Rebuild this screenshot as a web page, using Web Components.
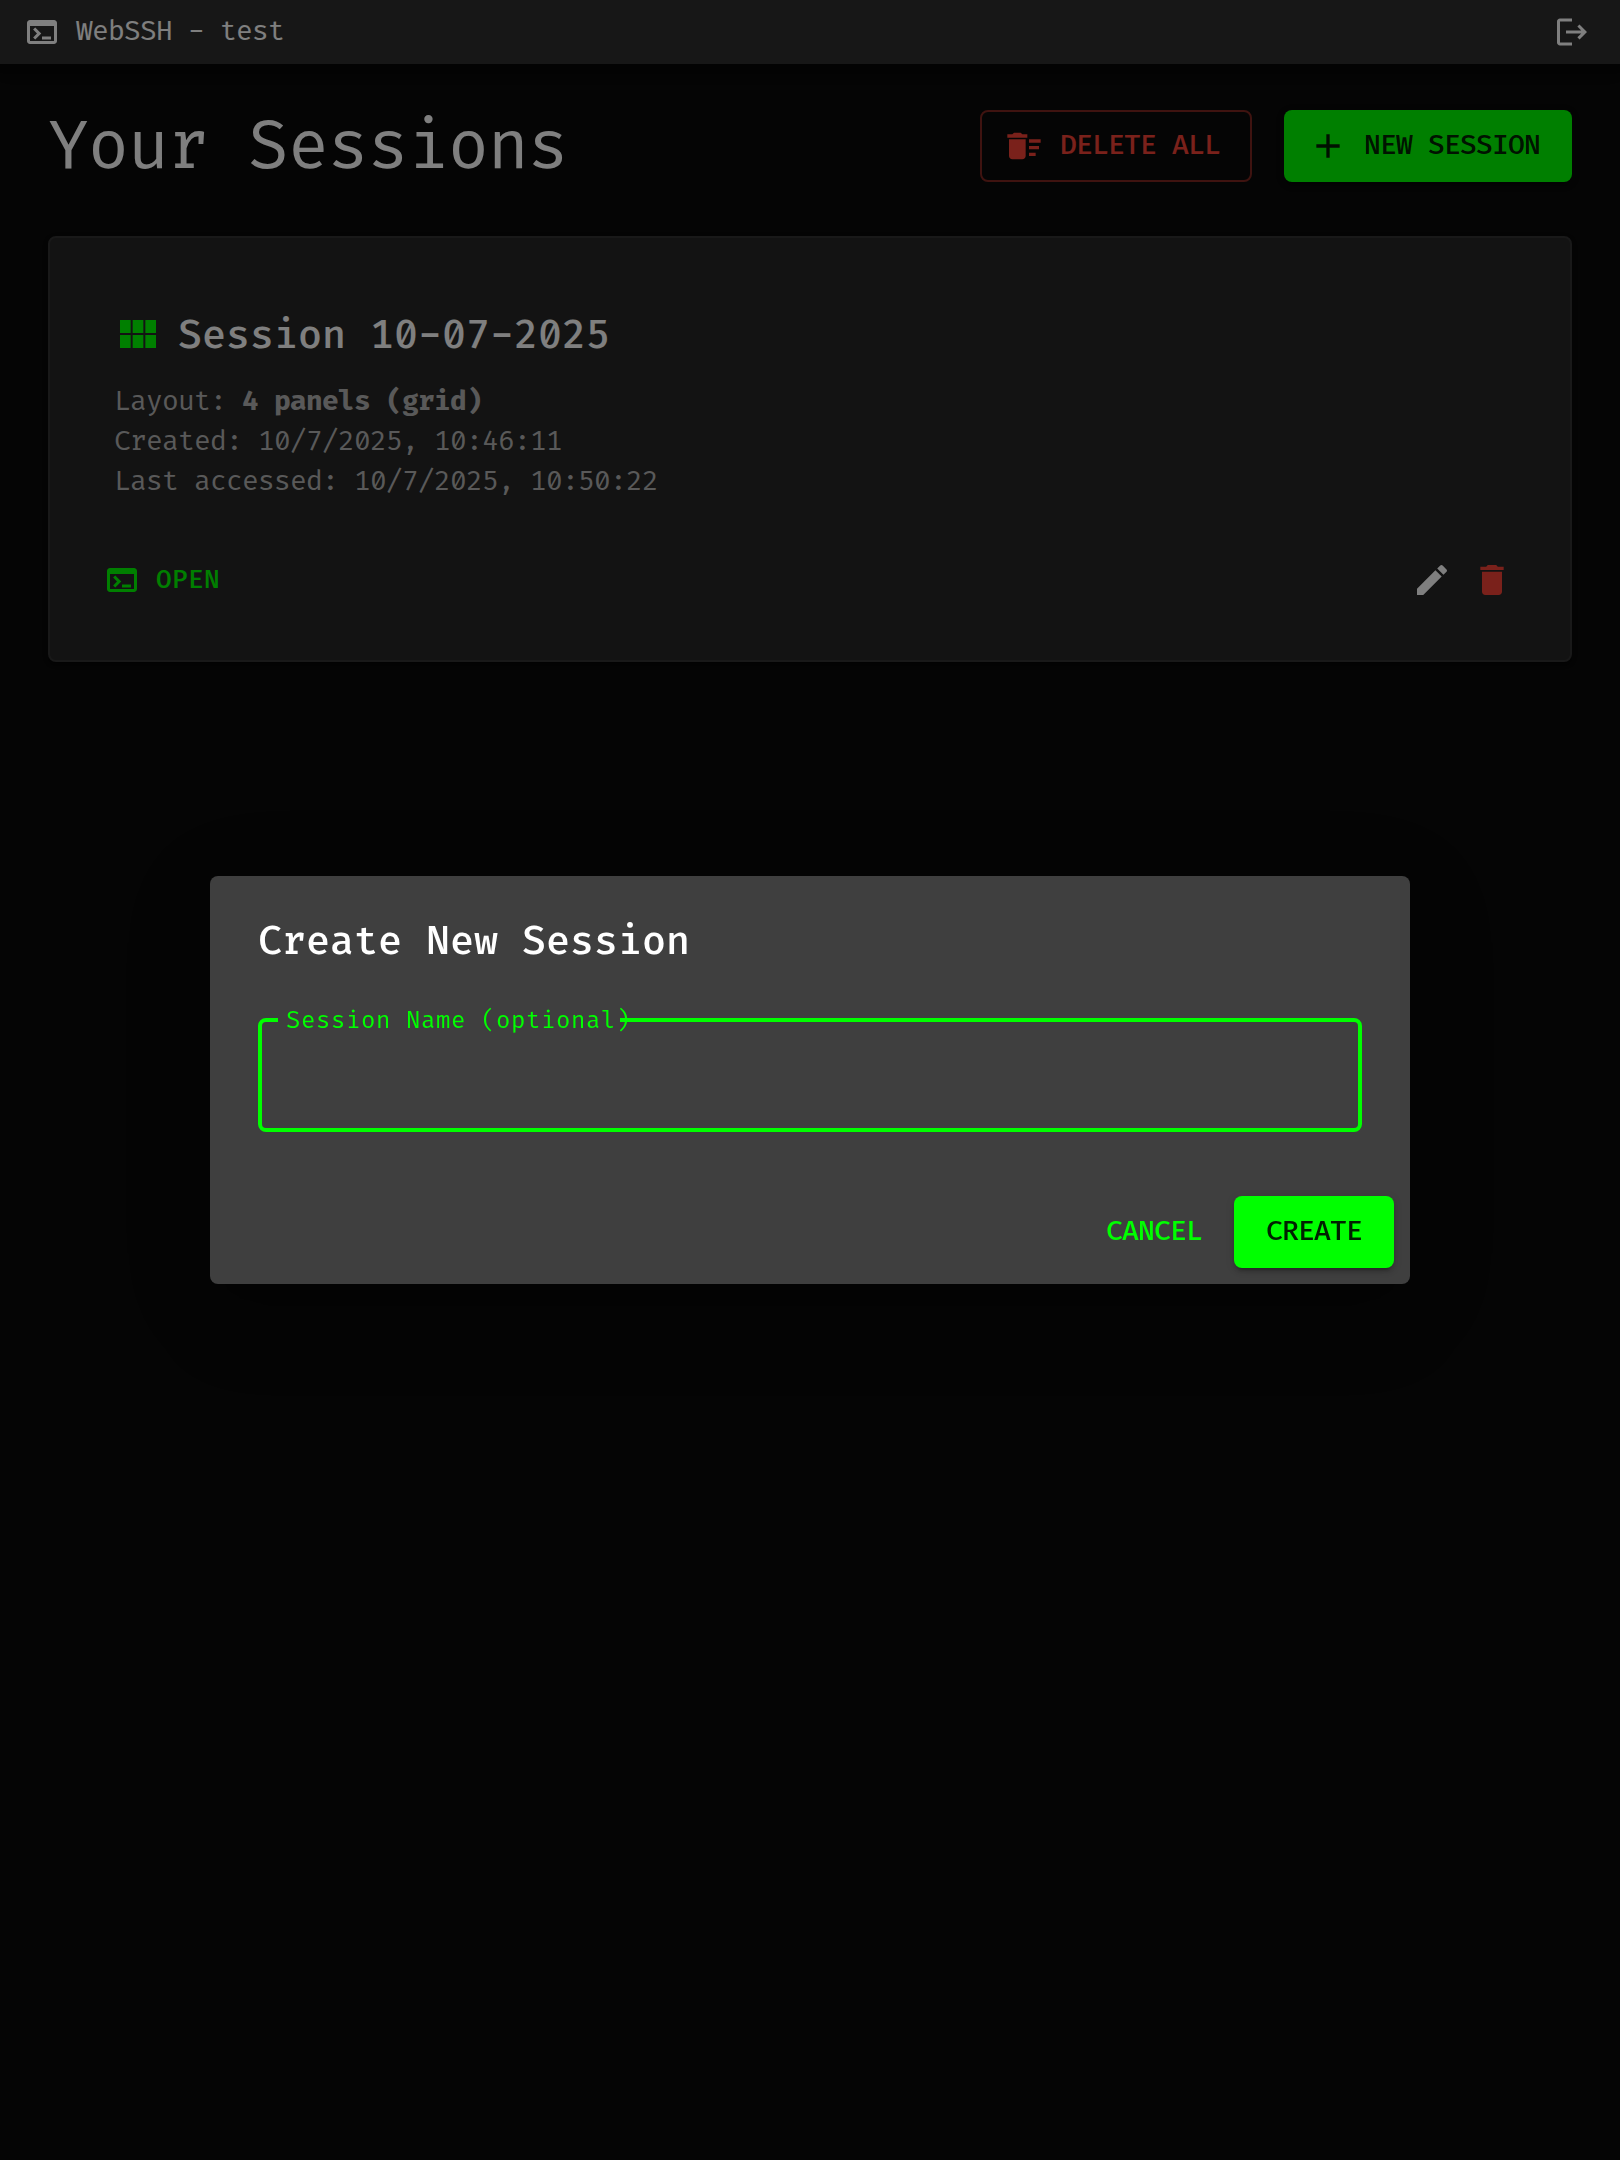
<!DOCTYPE html>
<html lang="en">
<head>
<meta charset="utf-8">
<title>WebSSH</title>
<style>
  html, body { margin: 0; height: 100%; background: #0a0a0a; }
  body {
    font-family: "Fira Code", "Fira Mono", "Noto Sans Mono", "Liberation Mono", monospace;
    font-variant-ligatures: none;
    color: #fff;
    --primary: #00ff00;
    --error: #f44336;
    overflow: hidden;
  }
</style>
</head>
<body>
<ssh-app></ssh-app>
<script>
const ICONS = {
  terminal: 'M20 4H4c-1.11 0-2 .9-2 2v12c0 1.1.89 2 2 2h16c1.1 0 2-.9 2-2V6c0-1.1-.89-2-2-2m0 14H4V8h16zm-2-1h-6v-2h6zM7.5 17l-1.41-1.41L8.67 13l-2.59-2.59L7.5 9l4 4z',
  logout: 'm17 7-1.41 1.41L18.17 11H8v2h10.17l-2.58 2.58L17 17l5-5zM4 5h8V3H4c-1.1 0-2 .9-2 2v14c0 1.1.9 2 2 2h8v-2H4z',
  sweep: 'M15 16h4v2h-4zm0-8h7v2h-7zm0 4h6v2h-6zM3 18c0 1.1.9 2 2 2h6c1.1 0 2-.9 2-2V8H3zM14 5h-3l-1-1H6L5 5H2v2h12z',
  add: 'M19 13h-6v6h-2v-6H5v-2h6V5h2v6h6z',
  grid: 'M3 5h5.33v6.5H3zM9.33 5h5.34v6.5H9.33zM15.67 5H21v6.5h-5.33zM3 12.5h5.33V19H3zM9.33 12.5h5.34V19H9.33zM15.67 12.5H21V19h-5.33z',
  edit: 'M3 17.25V21h3.75L17.81 9.94l-3.75-3.75zM20.71 7.04c.39-.39.39-1.02 0-1.41l-2.34-2.34a.9959.9959 0 0 0-1.41 0l-1.83 1.83 3.75 3.75z',
  trash: 'M6 19c0 1.1.9 2 2 2h8c1.1 0 2-.9 2-2V7H6zM19 4h-3.5l-1-1h-5l-1 1H5v2h14z'
};

function define(name, render) {
  customElements.define(name, class extends HTMLElement {
    connectedCallback() {
      if (this.shadowRoot) return;
      this.attachShadow({ mode: 'open' }).innerHTML = render(this);
    }
  });
}

define('ui-icon', el => `
  <style>
    :host { display: block; flex: none; width: var(--size, 40px); height: var(--size, 40px); }
    svg { display: block; width: 100%; height: 100%; fill: currentColor; }
  </style>
  <svg viewBox="0 0 24 24" aria-hidden="true"><path d="${ICONS[el.getAttribute('name')]}"/></svg>`);

define('ui-button', () => `
  <style>
    :host { display: block; flex: none; }
    button {
      display: flex; align-items: center; box-sizing: border-box; height: 72px; margin: 0;
      padding: 0 32px; border: 0; border-radius: 8px; background: none; color: var(--primary);
      font-family: inherit; font-size: 27.3px; line-height: 48px; font-weight: 500;
      letter-spacing: -0.8px; white-space: nowrap;
    }
    ::slotted(ui-icon) { margin: 0 16px 0 -8px; }
    .label { display: block; }
    :host([variant=contained]) button {
      background: var(--primary); color: rgba(0,0,0,.87);
      box-shadow: 0 6px 2px -4px rgba(0,0,0,.2), 0 4px 4px rgba(0,0,0,.14), 0 2px 10px rgba(0,0,0,.12);
    }
    :host([variant=outlined]) button { border: 2px solid rgba(244,67,54,.5); padding: 0 30px; color: var(--error); }
    :host([variant=text]) button { padding: 0 16px; }
    :host([variant=small]) button { height: 60px; padding: 0 10px; font-size: 25.35px; letter-spacing: .4px; }
    :host([variant=small]) .label { padding-top: 2px; }
    :host([variant=small]) ::slotted(ui-icon) { --size: 36px; margin-left: -4px; }
  </style>
  <button><slot name="icon"></slot><span class="label"><slot></slot></span></button>`);

define('app-bar', () => `
  <style>
    :host {
      display: flex; align-items: center; box-sizing: border-box; height: 64px; padding: 0 30px 0 24px;
      background: #2f2f2f; position: relative;
      box-shadow: 0 4px 8px -2px rgba(0,0,0,.2), 0 8px 10px rgba(0,0,0,.14), 0 2px 20px rgba(0,0,0,.12);
    }
    ui-icon { --size: 36px; }
    .title { flex: 1; margin-left: 16px; font-size: 27.3px; line-height: 40px; letter-spacing: -.8px; }
  </style>
  <ui-icon name="terminal"></ui-icon>
  <div class="title"><slot></slot></div>
  <ui-icon name="logout"></ui-icon>`);

define('page-header', () => `
  <style>
    :host { display: flex; align-items: center; gap: 32px; height: 72px; }
    h1 { flex: 1; margin: 0; font-weight: 400; font-size: 66.3px; line-height: 84px; letter-spacing: -.8px; white-space: nowrap; padding-top: 3px; }
  </style>
  <h1><slot></slot></h1>
  <slot name="actions" style="display:contents"></slot>`);

define('session-card', el => `
  <style>
    :host {
      display: flex; flex-direction: column; box-sizing: border-box; height: 426px; padding: 72px 58px 50px 64px;
      border: 2px solid #333; border-radius: 8px; background: #262626;
      box-shadow: 0 4px 2px -2px rgba(0,0,0,.2), 0 2px 2px rgba(0,0,0,.14), 0 2px 6px rgba(0,0,0,.12);
    }
    .head { display: flex; align-items: center; gap: 16px; height: 48px; color: var(--primary); }
    .head ui-icon { --size: 48px; }
    h2 { margin: 0; padding-top: 3px; color: #fff; font-weight: 500; font-size: 39px; line-height: 48px; letter-spacing: 0; }
    .meta { margin-top: 24px; color: #b3b3b3; font-size: 27.3px; line-height: 40px; letter-spacing: -.8px; }
    .meta div { height: 40px; white-space: pre; }
    b { font-weight: 700; }
    .actions { display: flex; align-items: center; margin: auto 0 0 -16px; height: 60px; }
    .actions ui-button { flex: 1; }
    .edit { margin-right: 20px; }
    .trash { color: var(--error); }
  </style>
  <div class="head"><ui-icon name="grid"></ui-icon><h2>${el.getAttribute('name')}</h2></div>
  <div class="meta">
    <div>Layout: <b>${el.getAttribute('layout')}</b></div>
    <div>Created: ${el.getAttribute('created')}</div>
    <div>Last accessed: ${el.getAttribute('accessed')}</div>
  </div>
  <div class="actions">
    <ui-button variant="small"><ui-icon slot="icon" name="terminal"></ui-icon>OPEN</ui-button>
    <ui-icon class="edit" name="edit"></ui-icon>
    <ui-icon class="trash" name="trash"></ui-icon>
  </div>`);

define('outlined-field', el => `
  <style>
    :host { display: block; color: var(--primary); }
    fieldset { box-sizing: border-box; height: 125px; margin: 0; min-width: 0; padding: 0 16px; border: 4px solid currentColor; border-radius: 8px; }
    legend { box-sizing: border-box; width: 342px; height: 26px; padding: 2px 8px 0; font-size: 23.4px; line-height: 24px; letter-spacing: .6px; white-space: nowrap; }
    input { width: 100%; height: 60px; border: 0; outline: 0; background: none; color: #fff; font: inherit; }
  </style>
  <fieldset><legend>${el.getAttribute('label')}</legend><input type="text"></fieldset>`);

define('modal-dialog', el => `
  <style>
    :host { display: flex; align-items: center; justify-content: center; position: fixed; inset: 0; background: rgba(0,0,0,.5); }
    section {
      display: flex; flex-direction: column; box-sizing: border-box; width: 1200px; height: 408px;
      border-radius: 8px; background: #3f3f3f; padding: 34px 16px 16px 48px;
      box-shadow: 0 22px 30px -14px rgba(0,0,0,.2), 0 48px 76px 6px rgba(0,0,0,.14), 0 18px 92px 16px rgba(0,0,0,.12);
    }
    h2 { margin: 0; font-weight: 500; font-size: 39px; line-height: 64px; letter-spacing: 0; }
    .body { margin: 33px 32px 0 0; }
    .actions { display: flex; justify-content: flex-end; gap: 16px; margin-top: auto; }
  </style>
  <section>
    <h2>${el.getAttribute('heading')}</h2>
    <div class="body"><slot></slot></div>
    <div class="actions"><slot name="actions"></slot></div>
  </section>`);

define('ssh-app', () => `
  <style>
    :host { display: block; height: 100%; }
    main { display: flex; flex-direction: column; gap: 54px; padding: 46px 48px; }
  </style>
  <app-bar>WebSSH - test</app-bar>
  <main>
    <page-header>Your Sessions
      <ui-button slot="actions" variant="outlined"><ui-icon slot="icon" name="sweep"></ui-icon>DELETE ALL</ui-button>
      <ui-button slot="actions" variant="contained"><ui-icon slot="icon" name="add"></ui-icon>NEW SESSION</ui-button>
    </page-header>
    <session-card name="Session 10-07-2025" layout="4 panels (grid)" created="10/7/2025, 10:46:11" accessed="10/7/2025, 10:50:22"></session-card>
  </main>
  <modal-dialog heading="Create New Session">
    <outlined-field label="Session Name (optional)"></outlined-field>
    <ui-button slot="actions" variant="text">CANCEL</ui-button>
    <ui-button slot="actions" variant="contained">CREATE</ui-button>
  </modal-dialog>`);
</script>
</body>
</html>
